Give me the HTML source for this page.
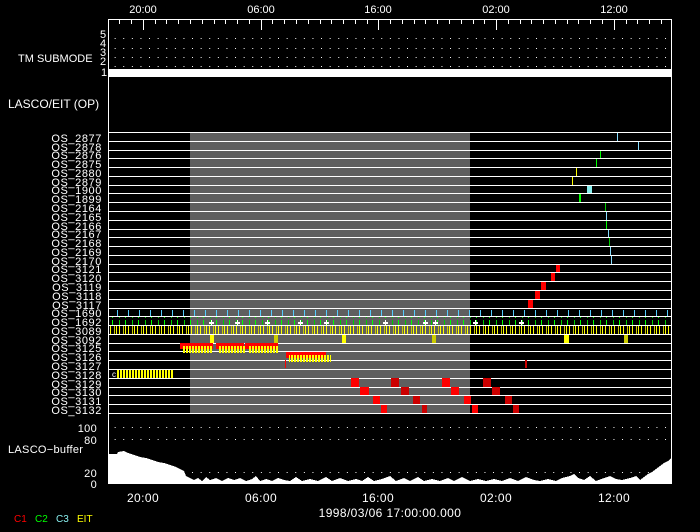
<!DOCTYPE html>
<html><head><meta charset="utf-8"><style>
html,body{margin:0;padding:0;background:#000;width:700px;height:532px;overflow:hidden}
svg{display:block}
text{font-family:"Liberation Sans",sans-serif;fill:#fff;font-size:11px}
.big{font-size:12px;letter-spacing:0.4px}
.lab{font-size:13px;letter-spacing:0.3px}
</style></head><body>
<svg width="700" height="532" viewBox="0 0 700 532" xmlns="http://www.w3.org/2000/svg" shape-rendering="crispEdges">
<defs>
<pattern id="dots" x="0" y="0" width="8.6" height="1" patternUnits="userSpaceOnUse"><rect x="3" y="0" width="1" height="1" fill="#fff"/></pattern>
<pattern id="yel" x="110" y="0" width="9" height="10" patternUnits="userSpaceOnUse"><rect x="0" y="0" width="1" height="10" fill="#ff0"/><rect x="4" y="0" width="1" height="10" fill="#cc0"/><rect x="6" y="0" width="1" height="10" fill="#ff0"/></pattern>
<pattern id="grn" x="112" y="0" width="13" height="10" patternUnits="userSpaceOnUse"><rect x="0" y="0" width="1" height="8" fill="#0f0"/><rect x="7" y="0" width="1" height="8" fill="#0c0"/></pattern>
<pattern id="cy" x="117" y="0" width="11" height="10" patternUnits="userSpaceOnUse"><rect x="0" y="0" width="1" height="8" fill="#5cf"/></pattern>
<pattern id="yb" x="117" y="0" width="3" height="10" patternUnits="userSpaceOnUse"><rect x="0" y="0" width="2" height="10" fill="#ff0"/></pattern>
</defs>
<text x="143" y="13" text-anchor="middle">20:00</text>
<text x="261" y="13" text-anchor="middle">06:00</text>
<text x="378" y="13" text-anchor="middle">16:00</text>
<text x="496" y="13" text-anchor="middle">02:00</text>
<text x="614" y="13" text-anchor="middle">12:00</text>
<rect x="108" y="19" width="563" height="1" fill="#fff"/>
<rect x="108" y="19" width="1" height="465" fill="#fff"/>
<rect x="671" y="19" width="1" height="465" fill="#fff"/>
<g fill="#fff">
<rect x="119" y="19" width="1" height="5"/><rect x="131" y="19" width="1" height="5"/><rect x="143" y="19" width="1" height="11"/><rect x="155" y="19" width="1" height="5"/><rect x="166" y="19" width="1" height="5"/><rect x="178" y="19" width="1" height="5"/><rect x="190" y="19" width="1" height="5"/><rect x="202" y="19" width="1" height="5"/><rect x="214" y="19" width="1" height="5"/><rect x="225" y="19" width="1" height="5"/><rect x="237" y="19" width="1" height="5"/><rect x="249" y="19" width="1" height="5"/><rect x="261" y="19" width="1" height="11"/><rect x="272" y="19" width="1" height="5"/><rect x="284" y="19" width="1" height="5"/><rect x="296" y="19" width="1" height="5"/><rect x="308" y="19" width="1" height="5"/><rect x="320" y="19" width="1" height="5"/><rect x="331" y="19" width="1" height="5"/><rect x="343" y="19" width="1" height="5"/><rect x="355" y="19" width="1" height="5"/><rect x="367" y="19" width="1" height="5"/><rect x="378" y="19" width="1" height="11"/><rect x="390" y="19" width="1" height="5"/><rect x="402" y="19" width="1" height="5"/><rect x="414" y="19" width="1" height="5"/><rect x="425" y="19" width="1" height="5"/><rect x="437" y="19" width="1" height="5"/><rect x="449" y="19" width="1" height="5"/><rect x="461" y="19" width="1" height="5"/><rect x="473" y="19" width="1" height="5"/><rect x="484" y="19" width="1" height="5"/><rect x="496" y="19" width="1" height="11"/><rect x="508" y="19" width="1" height="5"/><rect x="520" y="19" width="1" height="5"/><rect x="531" y="19" width="1" height="5"/><rect x="543" y="19" width="1" height="5"/><rect x="555" y="19" width="1" height="5"/><rect x="567" y="19" width="1" height="5"/><rect x="578" y="19" width="1" height="5"/><rect x="590" y="19" width="1" height="5"/><rect x="602" y="19" width="1" height="5"/><rect x="614" y="19" width="1" height="11"/><rect x="626" y="19" width="1" height="5"/><rect x="637" y="19" width="1" height="5"/><rect x="649" y="19" width="1" height="5"/><rect x="661" y="19" width="1" height="5"/>
</g>
<rect x="110" y="38" width="560" height="1" fill="url(#dots)"/>
<rect x="110" y="48" width="560" height="1" fill="url(#dots)"/>
<rect x="110" y="57" width="560" height="1" fill="url(#dots)"/>
<rect x="110" y="66" width="560" height="1" fill="url(#dots)"/>
<rect x="108" y="69" width="564" height="8" fill="#fff"/>
<text x="18" y="62">TM SUBMODE</text>
<text x="100" y="38" style="font-size:11px">5</text><text x="100" y="47" style="font-size:11px">4</text><text x="100" y="56" style="font-size:11px">3</text><text x="100" y="65" style="font-size:11px">2</text><text x="101" y="76" style="font-size:11px">1</text>
<text x="8" y="108" style="font-size:12px">LASCO/EIT (OP)</text>
<rect x="190" y="132" width="280" height="281" fill="#5f5f5f"/>
<g fill="#fff">
<rect x="109" y="132" width="562" height="1"/><rect x="109" y="141" width="562" height="1"/><rect x="109" y="150" width="562" height="1"/><rect x="109" y="158" width="562" height="1"/><rect x="109" y="167" width="562" height="1"/><rect x="109" y="176" width="562" height="1"/><rect x="109" y="185" width="562" height="1"/><rect x="109" y="193" width="562" height="1"/><rect x="109" y="202" width="562" height="1"/><rect x="109" y="211" width="562" height="1"/><rect x="109" y="220" width="562" height="1"/><rect x="109" y="229" width="562" height="1"/><rect x="109" y="237" width="562" height="1"/><rect x="109" y="246" width="562" height="1"/><rect x="109" y="255" width="562" height="1"/><rect x="109" y="264" width="562" height="1"/><rect x="109" y="272" width="562" height="1"/><rect x="109" y="281" width="562" height="1"/><rect x="109" y="290" width="562" height="1"/><rect x="109" y="299" width="562" height="1"/><rect x="109" y="308" width="562" height="1"/><rect x="109" y="316" width="562" height="1"/><rect x="109" y="325" width="562" height="1"/><rect x="109" y="334" width="562" height="1"/><rect x="109" y="343" width="562" height="1"/><rect x="109" y="351" width="562" height="1"/><rect x="109" y="360" width="562" height="1"/><rect x="109" y="369" width="562" height="1"/><rect x="109" y="378" width="562" height="1"/><rect x="109" y="387" width="562" height="1"/><rect x="109" y="395" width="562" height="1"/><rect x="109" y="404" width="562" height="1"/><rect x="108" y="413" width="564" height="1"/>
</g>
<g text-anchor="end" style="font-size:13px;letter-spacing:0.6px">
<text x="102" y="142">OS_2877</text><text x="102" y="151">OS_2878</text><text x="102" y="159">OS_2876</text><text x="102" y="168">OS_2875</text><text x="102" y="177">OS_2880</text><text x="102" y="186">OS_2879</text><text x="102" y="194">OS_1900</text><text x="102" y="203">OS_1899</text><text x="102" y="212">OS_2164</text><text x="102" y="221">OS_2165</text><text x="102" y="230">OS_2166</text><text x="102" y="238">OS_2167</text><text x="102" y="247">OS_2168</text><text x="102" y="256">OS_2169</text><text x="102" y="265">OS_2170</text><text x="102" y="273">OS_3121</text><text x="102" y="282">OS_3120</text><text x="102" y="291">OS_3119</text><text x="102" y="300">OS_3118</text><text x="102" y="309">OS_3117</text><text x="102" y="317">OS_1690</text><text x="102" y="326">OS_1692</text><text x="102" y="335">OS_3089</text><text x="102" y="344">OS_3092</text><text x="102" y="352">OS_3125</text><text x="102" y="361">OS_3126</text><text x="102" y="370">OS_3127</text><text x="102" y="379">OS_3128</text><text x="102" y="388">OS_3129</text><text x="102" y="396">OS_3130</text><text x="102" y="405">OS_3131</text><text x="102" y="414">OS_3132</text>
</g>
<rect x="617" y="133" width="1" height="8" fill="#8df"/>
<rect x="638" y="142" width="1" height="8" fill="#8df"/>
<rect x="600" y="151" width="1" height="7" fill="#0f0"/>
<rect x="596" y="159" width="1" height="8" fill="#0f0"/>
<rect x="576" y="168" width="1" height="8" fill="#ff0"/>
<rect x="572" y="177" width="1" height="8" fill="#ff0"/>
<rect x="587" y="186" width="5" height="7" fill="#8ee"/>
<rect x="579" y="194" width="2" height="8" fill="#0f0"/>
<rect x="605" y="203" width="1" height="8" fill="#0c0"/>
<rect x="606" y="212" width="1" height="8" fill="#8df"/>
<rect x="606" y="221" width="1" height="8" fill="#0f0"/>
<rect x="608" y="230" width="1" height="7" fill="#8df"/>
<rect x="609" y="238" width="1" height="8" fill="#0c0"/>
<rect x="610" y="247" width="1" height="8" fill="#8df"/>
<rect x="611" y="256" width="1" height="8" fill="#8df"/>
<rect x="556" y="265" width="4" height="7" fill="#f00"/>
<rect x="551" y="273" width="4" height="8" fill="#f00"/>
<rect x="541" y="282" width="5" height="8" fill="#f00"/>
<rect x="535" y="291" width="5" height="8" fill="#f00"/>
<rect x="528" y="300" width="5" height="8" fill="#f00"/>
<rect x="112" y="309" width="558" height="7" fill="url(#cy)"/>
<rect x="110" y="317" width="560" height="8" fill="url(#grn)"/>
<g fill="#fff"><rect x="209" y="322" width="5" height="2"/><rect x="211" y="320" width="1" height="5"/><rect x="235" y="322" width="5" height="2"/><rect x="237" y="320" width="1" height="5"/><rect x="265" y="322" width="5" height="2"/><rect x="267" y="320" width="1" height="5"/><rect x="298" y="322" width="5" height="2"/><rect x="300" y="320" width="1" height="5"/><rect x="324" y="322" width="5" height="2"/><rect x="326" y="320" width="1" height="5"/><rect x="383" y="322" width="5" height="2"/><rect x="385" y="320" width="1" height="5"/><rect x="423" y="322" width="5" height="2"/><rect x="425" y="320" width="1" height="5"/><rect x="433" y="322" width="5" height="2"/><rect x="435" y="320" width="1" height="5"/><rect x="473" y="322" width="5" height="2"/><rect x="475" y="320" width="1" height="5"/><rect x="519" y="322" width="5" height="2"/><rect x="521" y="320" width="1" height="5"/></g>
<rect x="110" y="326" width="561" height="8" fill="url(#yel)"/>
<g fill="#ff0"><rect x="210" y="335" width="4" height="8"/><rect x="274" y="335" width="4" height="8" fill="#cc0"/><rect x="342" y="335" width="4" height="8"/><rect x="432" y="335" width="4" height="8" fill="#cc0"/><rect x="564" y="335" width="5" height="8"/><rect x="624" y="335" width="4" height="8" fill="#cc0"/></g>
<g>
<rect x="180" y="343" width="33" height="6" fill="#f00"/><rect x="216" y="343" width="28" height="6" fill="#f00"/><rect x="245" y="343" width="33" height="6" fill="#f00"/>
<rect x="183" y="346" width="30" height="7" fill="url(#yb)"/><rect x="218" y="346" width="28" height="7" fill="url(#yb)"/><rect x="248" y="346" width="30" height="7" fill="url(#yb)"/>
<rect x="286" y="352" width="40" height="6" fill="#f00"/><rect x="289" y="355" width="42" height="7" fill="url(#yb)"/>
<rect x="285" y="360" width="1" height="8" fill="#f00"/>
<rect x="525" y="360" width="2" height="8" fill="#c00"/>
<rect x="117" y="370" width="56" height="8" fill="url(#yb)"/>
<text x="112" y="377" style="font-size:8px">c</text>
</g>
<g>
<rect x="351" y="378" width="8" height="9" fill="#f00"/><rect x="391" y="378" width="8" height="9" fill="#c00"/><rect x="442" y="378" width="8" height="9" fill="#f00"/><rect x="483" y="378" width="8" height="9" fill="#c00"/>
<rect x="360" y="387" width="9" height="8" fill="#f00"/><rect x="401" y="387" width="8" height="8" fill="#c00"/><rect x="451" y="387" width="8" height="8" fill="#f00"/><rect x="492" y="387" width="8" height="8" fill="#c00"/>
<rect x="373" y="396" width="7" height="8" fill="#f00"/><rect x="413" y="396" width="7" height="8" fill="#c00"/><rect x="464" y="396" width="7" height="8" fill="#f00"/><rect x="505" y="396" width="7" height="8" fill="#c00"/>
<rect x="381" y="405" width="6" height="8" fill="#f00"/><rect x="422" y="405" width="5" height="8" fill="#c00"/><rect x="472" y="405" width="6" height="8" fill="#f00"/><rect x="513" y="405" width="6" height="8" fill="#c00"/>
</g>
<rect x="110" y="427" width="560" height="1" fill="url(#dots)"/>
<rect x="110" y="439" width="560" height="1" fill="url(#dots)"/>
<rect x="110" y="472" width="560" height="1" fill="url(#dots)"/>
<polygon fill="#fff" points="109,484 109,454 117,454 118,452 124,451 128,453 134,455 140,457 146,458 152,460 158,462 164,463 170,465 176,467 180,469 184,471 186,476 190,478 194,480 198,478 202,481 206,477 210,480 216,478 222,481 228,478 234,480 240,478 246,481 252,479 256,476 260,481 266,479 272,481 278,478 284,480 290,481 296,477 302,481 310,479 318,481 326,477 332,481 340,478 348,481 356,479 362,481 368,477 374,481 382,479 390,476 396,481 404,478 410,481 418,477 424,481 432,479 440,481 448,478 454,481 462,477 470,481 478,479 486,481 494,479 502,481 510,478 518,481 526,477 534,480 540,481 548,479 556,481 562,478 570,476 574,474 578,478 584,480 590,476 596,481 604,478 610,476 616,479 622,480 630,478 636,476 640,480 644,477 648,474 652,472 656,469 660,466 664,463 668,461 670,459 671,458 671,484"/>
<g class="lab">
<text x="97" y="432" text-anchor="end">100</text>
<text x="97" y="444" text-anchor="end">80</text>
<text x="8" y="453">LASCO−buffer</text>
<text x="97" y="477" text-anchor="end">20</text>
<text x="97" y="488" text-anchor="end">0</text>
</g>
<rect x="108" y="483" width="564" height="1" fill="#fff"/>
<text x="143" y="502" text-anchor="middle" class="big">20:00</text>
<text x="261" y="502" text-anchor="middle" class="big">06:00</text>
<text x="378" y="502" text-anchor="middle" class="big">16:00</text>
<text x="496" y="502" text-anchor="middle" class="big">02:00</text>
<text x="614" y="502" text-anchor="middle" class="big">12:00</text>
<text x="390" y="517" text-anchor="middle" class="big">1998/03/06 17:00:00.000</text>
<text x="14" y="522" style="fill:#f00;font-size:10px">C1</text>
<text x="35" y="522" style="fill:#0f0;font-size:10px">C2</text>
<text x="56" y="522" style="fill:#8ee;font-size:10px">C3</text>
<text x="77" y="522" style="fill:#ff0;font-size:10px">EIT</text>
</svg>
</body></html>
